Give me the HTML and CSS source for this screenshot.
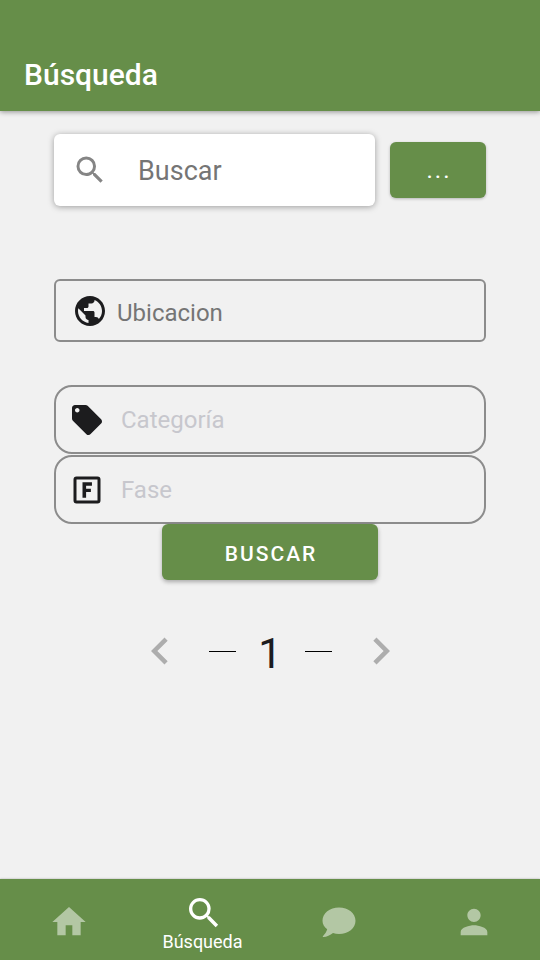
FILE: index.html
```html
<!DOCTYPE html>
<html lang="es">
<head>
<meta charset="utf-8">
<meta name="viewport" content="width=device-width, initial-scale=1">
<title>Búsqueda</title>
<link rel="stylesheet" href="styles.css">
</head>
<body>
<header class="app-bar"><h1>Búsqueda</h1></header>
<main>
  <form class="search-form">
    <div class="search-row">
      <label class="search-card">
        <svg class="icon" viewBox="0 0 24 24" aria-hidden="true"><path d="M15.5 14h-.79l-.28-.27A6.47 6.47 0 0 0 16 9.500 6.500 6.500 0 1 0 9.500 16c1.610 0 3.090-.59 4.230-1.570l.27.28v.79l5 4.990L20.490 19l-4.990-5zm-6 0C7.010 14 5 11.990 5 9.500S7.010 5 9.500 5 14 7.010 14 9.500 11.990 14 9.500 14z"/></svg>
        <input type="text" placeholder="Buscar" aria-label="Buscar">
      </label>
      <button class="button more" type="button" aria-label="Más opciones">...</button>
    </div>
    <label class="field location">
      <svg class="icon" viewBox="0 0 24 24" aria-hidden="true"><path d="M12 2C6.480 2 2 6.480 2 12s4.480 10 10 10 10-4.480 10-10S17.520 2 12 2zm-1 17.930c-3.950-.49-7-3.850-7-7.930 0-.62.08-1.210.21-1.790L9 15v1c0 1.100.9 2 2 2v1.930zm6.900-2.540c-.26-.81-1-1.390-1.900-1.390h-1v-3c0-.55-.45-1-1-1H8v-2h2c.55 0 1-.45 1-1V7h2c1.100 0 2-.9 2-2v-.41c2.930 1.190 5 4.060 5 7.410 0 2.080-.8 3.970-2.100 5.390z"/></svg>
      <input type="text" placeholder="Ubicacion" aria-label="Ubicacion">
    </label>
    <div class="filters">
      <label class="field filter">
        <svg class="icon" viewBox="0 0 24 24" aria-hidden="true"><path d="M21.410 11.580l-9-9C12.050 2.220 11.550 2 11 2H4c-1.100 0-2 .9-2 2v7c0 .55.22 1.050.59 1.420l9 9c.36.36.86.58 1.410.58s1.050-.22 1.410-.59l7-7c.37-.36.59-.86.59-1.410s-.23-1.060-.59-1.420zM5.500 7C4.670 7 4 6.330 4 5.500S4.670 4 5.500 4 7 4.670 7 5.500 6.330 7 5.500 7z"/></svg>
        <input type="text" placeholder="Categoría" aria-label="Categoría">
      </label>
      <label class="field filter">
        <svg class="icon" viewBox="0 0 24 24" aria-hidden="true"><path d="M5 3h14a2 2 0 0 1 2 2v14a2 2 0 0 1-2 2H5a2 2 0 0 1-2-2V5a2 2 0 0 1 2-2zm0 2v14h14V5zm4 1.900h6.300v2.200h-3.900v2h3.200v2.200h-3.200v3.900H9z" fill-rule="evenodd"/></svg>
        <input type="text" placeholder="Fase" aria-label="Fase">
      </label>
    </div>
    <button class="button submit" type="button">BUSCAR</button>
  </form>
  <nav class="pager" aria-label="Páginas">
    <button type="button" aria-label="Anterior"><svg viewBox="0 0 24 24"><path d="M15.410 7.410L14 6l-6 6 6 6 1.410-1.410L10.830 12z"/></svg></button>
    <div class="page"><span class="dash"></span><span class="number">1</span><span class="dash"></span></div>
    <button type="button" aria-label="Siguiente"><svg viewBox="0 0 24 24"><path d="M10 6L8.590 7.410 13.170 12l-4.580 4.590L10 18l6-6z"/></svg></button>
  </nav>
</main>
<nav class="tabs" aria-label="Principal">
  <a href="#inicio" aria-label="Inicio"><svg viewBox="0 0 24 24"><path d="M10 20v-6h4v6h5v-8h3L12 3 2 12h3v8z"/></svg></a>
  <a class="active" href="#busqueda" aria-current="page"><svg viewBox="0 0 24 24"><path d="M15.500 14h-.79l-.28-.27A6.470 6.470 0 0 0 16 9.500 6.500 6.500 0 1 0 9.500 16c1.610 0 3.090-.59 4.230-1.570l.27.28v.79l5 4.990L20.490 19l-4.990-5zm-6 0C7.010 14 5 11.990 5 9.500S7.010 5 9.500 5 14 7.010 14 9.500 11.990 14 9.500 14z"/></svg><span>Búsqueda</span></a>
  <a href="#mensajes" aria-label="Mensajes"><svg viewBox="0 0 40 40"><path d="M20 5.500c9.300 0 16.500 5.800 16.500 13.200S29.300 32 20 32c-2.200 0-4.200-.3-6-.9-2.800 2.400-6.200 3.900-9.700 4-.5 0-.7-.5-.4-.9 1.900-1.900 3.700-4.500 4.300-6.900-2.900-2.300-4.700-5.300-4.700-8.600C3.500 11.300 10.700 5.500 20 5.500z"/></svg></a>
  <a href="#perfil" aria-label="Perfil"><svg viewBox="0 0 24 24"><path d="M12 12c2.210 0 4-1.790 4-4s-1.790-4-4-4-4 1.790-4 4 1.790 4 4 4zm0 2c-2.670 0-8 1.340-8 4v2h16v-2c0-2.660-5.330-4-8-4z"/></svg></a>
</nav>
</body>
</html>
```
FILE: styles.css
```css
:root {
  --green: #668e49;
  --ink: #1c1c1e;
  --line: #8c8c8c;
}

* { box-sizing: border-box; }

body {
  margin: 0;
  min-height: 100vh;
  display: flex;
  flex-direction: column;
  background: #f1f1f1;
  color: var(--ink);
  font-family: Roboto, sans-serif;
}

svg { display: block; fill: currentColor; }

.app-bar {
  padding: 57px 24px 18px;
  background: var(--green);
  color: #fff;
  box-shadow: 0 1px 5px rgba(0, 0, 0, .4);
}

h1 {
  margin: 0;
  font-size: 30px;
  line-height: 36px;
  font-weight: 500;
}

main { flex: 1; padding: 23px 10% 0; }

.search-form { display: flex; flex-direction: column; }

.search-row { display: flex; align-items: center; gap: 15px; }

.search-card {
  flex: 1;
  min-width: 0;
  display: flex;
  align-items: center;
  gap: 30px;
  height: 72px;
  padding: 0 18px;
  border-radius: 6px;
  background: #fff;
  box-shadow: 0 1px 6px rgba(0, 0, 0, .35);
}

.search-card .icon { color: #858585; }

.icon { width: 36px; height: 36px; flex: none; }

input {
  flex: 1;
  min-width: 0;
  padding: 0;
  border: 0;
  outline: 0;
  background: none;
  color: var(--ink);
  font: 24px/28px Roboto, sans-serif;
}

.search-card input { padding-top: 2px; font-size: 27px; line-height: 32px; }

input::placeholder { color: #757575; opacity: 1; }

.button {
  height: 56px;
  padding: 3px 0 0 2px;
  border: 0;
  border-radius: 6px;
  background: var(--green);
  color: #fff;
  font: 500 21px/24px Roboto, sans-serif;
  letter-spacing: 2px;
  box-shadow: 0 2px 4px rgba(0, 0, 0, .3);
}

.more {
  width: 96px;
  padding-top: 0;
  font-weight: 400;
  font-size: 24px;
  box-shadow: 0 1px 3px rgba(0, 0, 0, .25);
}

.submit { width: 50%; align-self: center; }

.field {
  display: flex;
  align-items: center;
  border: 2px solid var(--line);
}

.location {
  gap: 9px;
  height: 63px;
  margin-top: 73px;
  padding: 0 16px;
  border-radius: 6px;
}

.location input { padding-top: 5px; }

.filters {
  display: flex;
  flex-direction: column;
  gap: 1px;
  margin-top: 43px;
}

.filter {
  gap: 16px;
  height: 69px;
  padding: 0 13px;
  border-radius: 18px;
}

.filter input::placeholder { color: #c7c7cd; }

.pager {
  display: flex;
  align-items: center;
  justify-content: center;
  gap: 22px;
  margin-top: 44px;
}

.pager button {
  padding: 0;
  border: 0;
  background: none;
  color: #adadad;
}

.pager svg { width: 54px; height: 54px; }

.page { display: flex; align-items: center; }

.dash { width: 27px; height: 1px; background: #000; }

.number {
  width: 69px;
  padding-top: 6px;
  text-align: center;
  font-size: 42px;
  line-height: 48px;
}

.tabs {
  display: grid;
  grid-template-columns: repeat(4, 1fr);
  height: 81px;
  background: var(--green);
  box-shadow: 0 0 2px rgba(0, 0, 0, .3);
}

.tabs a {
  display: flex;
  flex-direction: column;
  align-items: center;
  justify-content: center;
  padding-top: 5px;
  color: #b3c7a4;
  text-decoration: none;
  font-size: 18px;
  line-height: 18px;
}

.tabs a.active { color: #fff; }

.tabs svg { width: 40px; height: 40px; margin-left: 3px; }
```
